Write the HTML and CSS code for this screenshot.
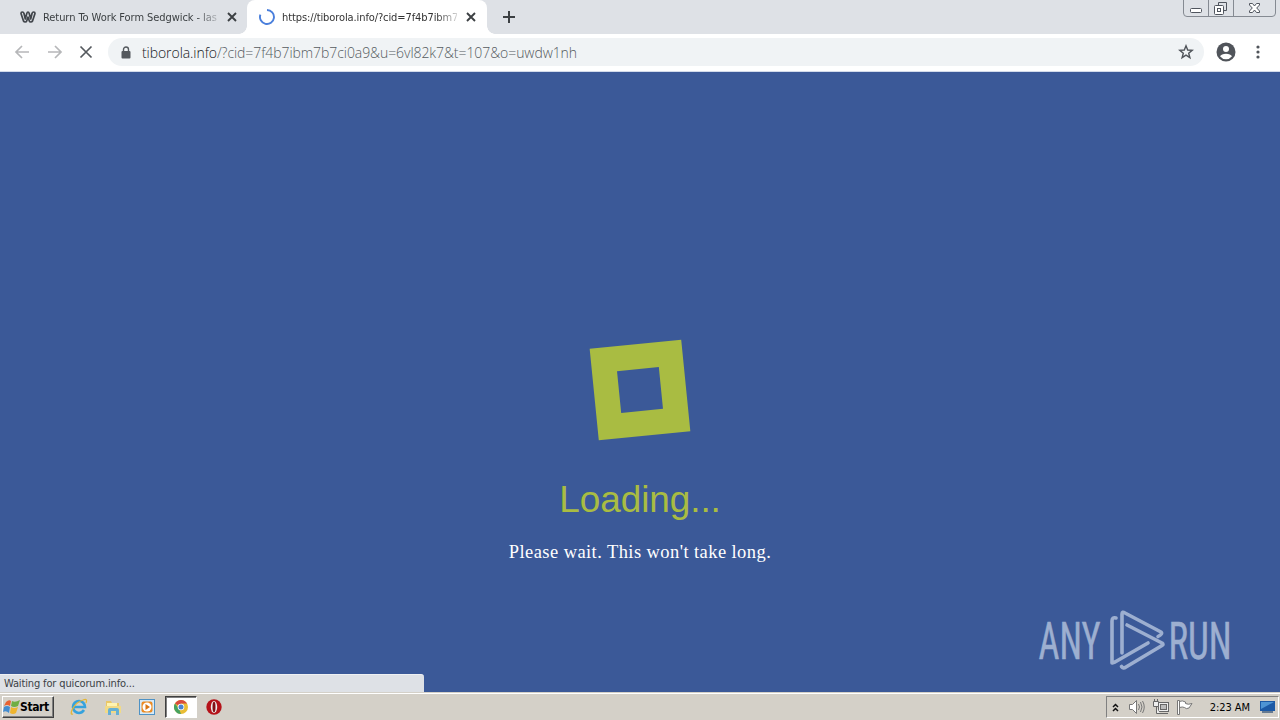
FILE: index.html
```html
<!DOCTYPE html>
<html lang="en">
<head>
    <meta charset="UTF-8">
    <title>Loading...</title>
    <link rel="stylesheet" href="styles.css">
</head>
<body>
    <div class="tabstrip">
        <div class="tab">
            <svg class="favicon" width="16" height="12" viewBox="0 0 16 12" fill="none" stroke="#41454b" stroke-width="1.7" stroke-linejoin="round"><path d="M1 2.500Q1 1 2.300 1T4 2.500L5.300 8 6.800 2.500Q7.200 1 8 1T9.200 2.500L10.700 8 12 2.500Q12.400 1 13.700 1T15 2.500L12.500 10Q12 11 10.800 11T9.300 10L8 6 6.700 10Q6.400 11 5.200 11T3.500 10Z"/></svg>
            <span class="tab-title first-title">Return To Work Form Sedgwick - las</span>
            <svg class="close" width="10" height="10" viewBox="0 0 10 10" stroke="#3c4043" stroke-width="1.9"><path d="M1 1L9 9M9 1L1 9"/></svg>
        </div>
        <div class="tab active">
            <svg class="spinner" width="16" height="16" viewBox="0 0 16 16" fill="none" stroke="#4a7fdc" stroke-width="1.9"><path d="M8 1A7 7 0 1 1 1.4 5.6"/></svg>
            <span class="tab-title second-title">https://tiborola.info/?cid=7f4b7ibm7</span>
            <svg class="close" width="10" height="10" viewBox="0 0 10 10" stroke="#3c4043" stroke-width="1.9"><path d="M1 1L9 9M9 1L1 9"/></svg>
        </div>
        <svg class="new-tab" width="12" height="12" viewBox="0 0 12 12" stroke="#3c4043" stroke-width="2"><path d="M6 0V12M0 6H12"/></svg>
        <svg class="window-buttons" width="94" height="17" viewBox="0 0 94 17" fill="none" stroke="#858a92">
            <path d="M.5 0V13Q.5 16.500 4 16.500H89Q92.500 16.500 92.500 13V0M25.500 0V16M50.500 0V16" />
            <g stroke="#50555e"><rect x="7.500" y="8.500" width="11" height="4" rx="1" fill="#fff"/>
            <path d="M35.500 5V2.500H43.500V10.500H41" /><rect x="31.500" y="5.500" width="9" height="9" rx="1" fill="#fff"/><rect x="34.500" y="8.500" width="3" height="3"/>
            <path fill="#fff" d="M66.500 3.500H69.500L71.500 6 73.500 3.500H76.500V5L73.700 8 76.500 11V12.500H73.500L71.500 10 69.500 12.500H66.500V11L69.300 8 66.500 5Z"/></g>
        </svg>
    </div>
    <div class="toolbar">
        <svg class="nav back" width="16" height="14" viewBox="0 0 16 14"><path d="M15 7H2M8 1L2 7L8 13"/></svg>
        <svg class="nav forward" width="16" height="14" viewBox="0 0 16 14"><path d="M1 7H14M8 1L14 7L8 13"/></svg>
        <svg class="nav stop" width="14" height="14" viewBox="0 0 14 14"><path d="M1.500 1.500L12.500 12.500M12.500 1.500L1.500 12.500"/></svg>
        <div class="omnibox">
            <svg width="10" height="13" viewBox="0 0 10 13"><rect x=".5" y="5" width="9" height="7.500" rx="1" fill="#55595e"/><path d="M2.500 5V3.500A2.500 2.500 0 0 1 7.500 3.500V5" fill="none" stroke="#55595e" stroke-width="1.400"/></svg>
            <span class="url"><span class="host">tiborola.info</span>/?cid=7f4b7ibm7b7ci0a9&amp;u=6vl82k7&amp;t=107&amp;o=uwdw1nh</span>
            <svg class="star" width="16" height="16" viewBox="0 0 16 16" fill="none" stroke="#50545a" stroke-width="1.400"><path d="M8 1.800L9.700 6 14.200 6.300 10.700 9.200 11.900 13.700 8 11.200 4.100 13.700 5.300 9.200 1.800 6.300 6.300 6Z"/></svg>
        </div>
        <svg class="profile" width="20" height="20" viewBox="0 0 20 20"><circle cx="10" cy="10" r="9.500" fill="#50545a"/><circle cx="10" cy="7" r="3" fill="#fff"/><path d="M4 14.200Q5.500 11.700 10 11.700T16 14.200Q13.500 17.300 10 17.300T4 14.200Z" fill="#fff"/></svg>
        <svg class="menu" width="4" height="14" viewBox="0 0 4 14" fill="#50545a"><circle cx="2" cy="2" r="1.600"/><circle cx="2" cy="7" r="1.600"/><circle cx="2" cy="12" r="1.600"/></svg>
    </div>
    <main class="page">
        <div class="loader"></div>
        <h1 class="loading">Loading...</h1>
        <p class="message">Please wait. This won't take long.</p>
        <svg class="watermark" width="200" height="64" viewBox="0 0 200 64">
            <g fill="#9dafd0" stroke="#9dafd0" stroke-width=".5" font-family="Roboto, sans-serif" font-size="51">
                <text transform="translate(2.500 49) scale(.62 1)" textLength="100" lengthAdjust="spacingAndGlyphs">ANY</text>
                <text transform="translate(132.500 49) scale(.62 1)" textLength="102" lengthAdjust="spacingAndGlyphs">RUN</text>
            </g>
            <g fill="none" stroke="#9dafd0" stroke-width="3.600" stroke-linejoin="round" stroke-linecap="round">
                <path d="M80 8Q76 7 76 11V53L79 52L112 33"/>
                <path d="M86 43V4Q86 1 89 3L125 22Q127 24 122 26.500"/>
                <path d="M91 15L126 33Q128 34.500 126 35.500L90 57Q87 59 85.500 56.500"/>
            </g>
        </svg>
        <div class="status">Waiting for quicorum.info...</div>
    </main>
    <footer class="taskbar">
        <div class="start">
            <svg width="17" height="16" viewBox="0 0 17 16"><path d="M3 3Q6 0 8 2L7 7Q4 5 1 7Z" fill="#e86232"/><path d="M9 2Q12 4 17 1L15 7Q11 9 8 7Z" fill="#70ae43"/><path d="M1 8Q4 6 7 8L6 14Q3 11 0 13Z" fill="#438cd0"/><path d="M8 8Q11 10 15 8L13 14Q10 16 7 14Z" fill="#efb52f"/></svg>
            <b>Start</b>
        </div>
        <svg class="ie" width="18" height="18" viewBox="0 0 18 18" fill="none"><path d="M14 12Q12 15 9 15A6 6 0 1 1 15 9H4" stroke="#35a2dd" stroke-width="2.600"/><path d="M3 16Q0 17 2 12Q6 4 13 2Q18 0 16 5" stroke="#e4b635" stroke-width="1.300"/></svg>
        <svg class="folder" width="18" height="17" viewBox="0 0 18 17"><path d="M2 2H7L8 4H15V14H2Z" fill="#eac767"/><path d="M3 4H13V8H3Z" fill="#fff3b0"/><path d="M1 7H17V14H1Z" fill="#f1da87"/><path d="M4 16V11Q4 9 6 9H13Q15 9 15 11V16H12V12H7V16Z" fill="#66afd4"/></svg>
        <svg class="media" width="16" height="16" viewBox="0 0 16 16"><rect x=".5" y=".5" width="15" height="15" fill="#d6eaf8" stroke="#4e92c5"/><rect x="2.500" y="2.500" width="11" height="11" rx="2" fill="#ec8b23"/><circle cx="8" cy="8" r="4.500" fill="#fff"/><path d="M6.500 5L11 8L6.500 11Z" fill="#d97512"/></svg>
        <div class="task-active">
            <svg width="14" height="14" viewBox="0 0 14 14"><circle cx="7" cy="7" r="7" fill="#e9bd35"/><path d="M7 7L1 3.400A7 7 0 0 1 13.100 3.600H7Z" fill="#d94b3e"/><path d="M1 3.400L5 9 7 14A7 7 0 0 1 1 3.400" fill="#46a260"/><circle cx="7" cy="7" r="3.300" fill="#fff"/><circle cx="7" cy="7" r="2.500" fill="#4a83d2"/></svg>
        </div>
        <svg class="opera" width="16" height="16" viewBox="0 0 16 16"><circle cx="8" cy="8" r="7.700" fill="#b51219"/><ellipse cx="8" cy="8" rx="3.200" ry="6" fill="#eee"/><ellipse cx="8" cy="8" rx="1.500" ry="5.300" fill="#821116"/></svg>
        <div class="tray">
            <svg class="chevrons" width="7" height="9" viewBox="0 0 7 9" fill="none" stroke="#111" stroke-width="1.500"><path d="M1 4L3.500 1.500L6 4M1 8L3.500 5.500L6 8"/></svg>
            <svg class="volume" width="17" height="16" viewBox="0 0 17 16" fill="none" stroke="#777"><path fill="#fff" d="M.5 5.500H3.500L7.500 1.500V14.500L3.500 10.500H.5Z"/><path d="M9.500 5Q11.500 8 9.500 11M11.500 3Q14.500 8 11.500 13M13.500 2Q17 8 13.500 14"/></svg>
            <svg class="network" width="17" height="16" viewBox="0 0 17 16" fill="#eee" stroke="#666"><rect x="5.500" y="3.500" width="10" height="9"/><rect x="7.500" y="5.500" width="6" height="5" fill="#bbb"/><path d="M6 14.500H15M.5 2.500H5.500V7.500H.5ZM1.500 0V2M4.500 0V2M3.500 8V14.500H7"/></svg>
            <svg class="flag" width="16" height="16" viewBox="0 0 16 16" fill="#fff" stroke="#777"><path d="M.5 15.500V1.500H2.500V15.500ZM2.500 2.500Q5 1 8.500 3V4.500Q11 6 15 4.500L12 9Q9 10.500 7.500 8.500Q5.500 7.500 2.500 8.500Z"/></svg>
            <span class="clock">2:23 AM</span>
            <svg class="desktop" width="15" height="14" viewBox="0 0 15 14"><rect width="15" height="10" y="1" fill="#1c59a5"/><path d="M1 2H14L1 9Z" fill="#4e94d4"/><path d="M2 12H13" stroke="#667a91" stroke-width="2"/></svg>
        </div>
    </footer>
</body>
</html>
```
FILE: styles.css
```css
* { box-sizing: border-box; }
body {
    margin: 0;
    width: 1280px;
    height: 720px;
    overflow: hidden;
    display: flex;
    flex-direction: column;
    font-family: "DejaVu Sans Condensed", "DejaVu Sans", sans-serif;
    font-stretch: condensed;
}
svg { display: block; flex: none; }
.tabstrip { height: 34px; flex: none; background: #dee1e6; display: flex; }
.tab { width: 247px; height: 34px; display: flex; align-items: center; padding: 0 10px 0 20px; font-size: 11px; color: #3c4043; }
.tab.active { width: 240px; padding: 0 11px 0 12px; background: white; border-radius: 8px 8px 0 0; color: #333; position: relative; }
.tab.active::before, .tab.active::after {
    content: "";
    position: absolute;
    bottom: 0;
    width: 8px;
    height: 8px;
}
.tab.active::before { left: -8px; background: radial-gradient(circle at 0 0, transparent 7.5px, white 8px); }
.tab.active::after { right: -8px; background: radial-gradient(circle at 100% 0, transparent 7.5px, white 8px); }
.tab-title { width: 175px; overflow: hidden; white-space: nowrap; -webkit-mask-image: linear-gradient(to right, black 88%, rgba(0, 0, 0, 0.2)); }
.favicon { margin-right: 7px; }
.spinner { margin-right: 7px; }
.first-title { letter-spacing: -0.07px; }
.second-title { letter-spacing: -0.1px; }
.close { margin-left: auto; }
.new-tab { margin: 11px 0 0 16px; }
.window-buttons { margin-left: auto; margin-right: 3px; }
.toolbar { height: 38px; flex: none; background: white; border-bottom: 1px solid #d3dbea; display: flex; align-items: center; padding: 0 20px 1px 14px; }
.nav { fill: none; stroke: #b6b7b9; stroke-width: 1.7; }
.forward { margin-left: 17px; }
.stop { margin-left: 16px; stroke: #55595e; }
.omnibox { width: 1096px; height: 28px; margin-left: 15px; border-radius: 14px; background: #f0f3f5; display: flex; align-items: center; padding: 0 10px 0 13px; }
.url { margin-left: 11px; font: 300 14px "Open Sans", sans-serif; letter-spacing: -0.07px; color: #555b60; white-space: nowrap; }
.host { color: #15181b; }
.star { margin-left: auto; }
.profile { margin-left: 12px; }
.menu { margin-left: auto; }
.page { height: 620px; flex: none; background: #3b5998; position: relative; display: flex; flex-direction: column; align-items: center; padding-top: 272px; }
.loader { width: 92px; height: 92px; border: 25px solid #a9bc42; transform: rotate(-5.7deg); }
.loading { margin: 43px 0 0; font: 37px/42px "Liberation Sans", Arial, sans-serif; color: #a9bc42; letter-spacing: -0.1px; }
.message { margin: 19px 0 0; font: 18.5px/24px "Palatino Linotype", "Liberation Serif", serif; color: white; letter-spacing: 0.42px; white-space: nowrap; }
.watermark { position: absolute; left: 1036px; top: 538px; }
.status { position: absolute; left: 0; bottom: 0; width: 424px; height: 18px; background: #dee1e6; border-top: 1px solid #eef0f3; border-radius: 0 3px 0 0; padding-left: 4px; font-size: 11px; line-height: 17px; letter-spacing: -0.14px; color: #3b3f45; }
.taskbar { height: 28px; flex: none; background: #d4d0c8; border-top: 1px solid #d4d0c8; box-shadow: inset 0 1px white; display: flex; align-items: center; padding: 1px 1px 0 2px; }
.start { width: 52px; height: 22px; border: 1px solid; border-color: white #404040 #404040 white; box-shadow: inset -1px -1px #808080; display: flex; align-items: center; font-size: 12px; letter-spacing: -0.4px; }
.ie { margin-left: 16px; }
.folder { margin-left: 16px; }
.media { margin-left: 17px; }
.task-active { width: 32px; height: 22px; margin-left: 10px; background: white; border: 1px solid; border-color: #404040 white white #404040; box-shadow: inset 1px 1px #808080; display: flex; align-items: center; justify-content: center; }
.opera { margin-left: 9px; }
.tray { margin-left: auto; width: 173px; height: 22px; border: 1px solid; border-color: #808080 white white #808080; display: flex; align-items: center; padding: 0 3px 0 5px; font-size: 11px; }
.volume { margin-left: 10px; }
.network { margin-left: 7px; }
.flag { margin-left: 7px; }
.clock { margin-left: auto; margin-right: 10px; letter-spacing: -0.05px; white-space: nowrap; }
```
